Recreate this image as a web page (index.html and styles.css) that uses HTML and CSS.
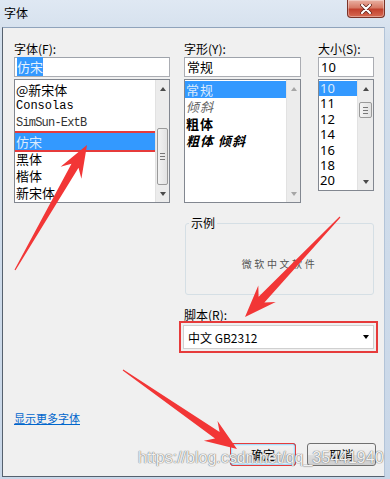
FILE: index.html
```html
<!DOCTYPE html>
<html lang="zh-CN">
<head>
<meta charset="UTF-8">
<meta name="viewport" content="width=device-width, initial-scale=1.0">
<title>字体</title>
<link rel="stylesheet" href="styles.css">
</head>
<body>

<div class="window">

<div class="titlebar">
<span class="title">字体</span>
<button class="close">
<svg width="12" height="10" viewBox="0 0 12 10">
<path d="M2 1 L10 9 M10 1 L2 9" stroke="#5b1d15" stroke-width="3.6" stroke-linecap="round"/>
<path d="M2 1 L10 9 M10 1 L2 9" stroke="#fff" stroke-width="2.2" stroke-linecap="round"/>
</svg>
</button>
</div>

<div class="client">

<div class="main">

<div class="col col-font">
<label>字体(F):</label>
<div class="field"><span class="hilite">仿宋</span></div>
<div class="listbox font-list">
<ul class="items">
<li>@新宋体</li>
<li class="mono">Consolas</li>
<li class="simsun">SimSun-ExtB</li>
<li class="selected marked">仿宋</li>
<li>黑体</li>
<li>楷体</li>
<li>新宋体</li>
</ul>
<div class="scrollbar">
<span class="arrow up"></span>
<div class="track"><span class="thumb"></span></div>
<span class="arrow down"></span>
</div>
</div>
</div>

<div class="col col-right">
<div class="row">

<div class="col col-style">
<label>字形(Y):</label>
<div class="field">常规</div>
<div class="listbox style-list">
<ul class="items">
<li class="selected">常规</li>
<li class="italic">倾斜</li>
<li class="bold">粗体</li>
<li class="bold italic">粗体 倾斜</li>
</ul>
<div class="scrollbar off">
<span class="arrow up"></span>
<div class="track"></div>
<span class="arrow down"></span>
</div>
</div>
</div>

<div class="col col-size">
<label>大小(S):</label>
<div class="field num">10</div>
<div class="listbox size-list">
<ul class="items">
<li class="selected">10</li>
<li>11</li>
<li>12</li>
<li>14</li>
<li>16</li>
<li>18</li>
<li>20</li>
</ul>
<div class="scrollbar">
<span class="arrow up"></span>
<div class="track"><span class="thumb"></span></div>
<span class="arrow down"></span>
</div>
</div>
</div>

</div>

<fieldset class="sample">
<legend>示例</legend>
<span class="sample-text">微软中文软件</span>
</fieldset>

<label class="script-label">脚本(R):</label>
<div class="select">
<span>中文 GB2312</span>
<span class="caret"></span>
</div>
</div>

</div>

<a class="more" href="#">显示更多字体</a>

<div class="buttons">
<button class="btn btn-ok">确定</button>
<button class="btn btn-cancel">取消</button>
</div>

</div>

<div class="watermark">https://blog.csdn.net/qq_35441940</div>

<!-- annotation arrows drawn over the dialog -->
<svg class="arrows" width="390" height="479" viewBox="0 0 390 479">
<polygon points="14.5,269.7 71.5,163.8 60.6,166.7 87,145 81.4,178.7 78.5,167.8 15.5,270.3"/>
<polygon points="339.6,216.6 258.6,296.8 258.3,285.5 245,317 275.7,302.1 264.4,302.4 340.4,217.4"/>
<polygon points="123.3,369.5 219.6,432 217.5,420.9 237,449 203.9,440.7 215,438.6 122.7,370.5"/>
</svg>

</div>

</body>
</html>
```

FILE: styles.css
```css
* {
    box-sizing: border-box;
}

body {
    margin: 0;
    width: 390px;
    height: 479px;
    overflow: hidden;
    font-family: "Noto Sans CJK SC", "Noto Sans", sans-serif;
    font-size: 12px;
    color: #000;
}

.window {
    position: relative;
    display: flex;
    flex-direction: column;
    height: 479px;
    padding: 0 5px 2px 2px;
    background: linear-gradient(180deg, #dfe8f3 0, #d3dfec 40px, #c9d7e8 100%);
}

.titlebar {
    height: 27px;
    display: flex;
    justify-content: space-between;
    align-items: flex-start;
}

.title {
    padding: 6px 0 0 2px;
    line-height: 14px;
    font-size: 12px;
}

.close {
    width: 38px;
    height: 18px;
    padding: 0;
    display: flex;
    align-items: center;
    justify-content: center;
    border: 1px solid #7a3328;
    border-top: none;
    border-radius: 0 0 4px 4px;
    background: linear-gradient(180deg, #eab1a3 0, #d77a66 45%, #c2412e 55%, #d66a52 100%);
    box-shadow: inset 0 0 0 1px rgba(255, 255, 255, .35);
}

.client {
    flex: 1;
    display: flex;
    flex-direction: column;
    background: #f0f0f0;
    border: 1px solid;
    border-color: #8fa3bb #b3c4d8 #56616e #56616e;
    padding: 14px 8px 10px 11px;
}

.main {
    display: flex;
    gap: 14px;
}

.col-font {
    width: 156px;
}

.col-right {
    width: 190px;
    display: flex;
    flex-direction: column;
}

.row {
    display: flex;
    gap: 17px;
    align-items: flex-start;
}

.col-style {
    width: 117px;
}

.col-size {
    width: 56px;
}

label {
    display: block;
    line-height: 14px;
    font-size: 12px;
}

.field {
    margin-top: 1px;
    height: 20px;
    padding: 0 2px;
    border: 1px solid #abadb3;
    border-top-color: #9ea3ab;
    background: #fff;
    font-size: 13px;
    line-height: 18px;
    white-space: nowrap;
}

.field.num {
    font-family: "Noto Sans", sans-serif;
}

.hilite {
    background: #3399ff;
    color: #e6f1fd;
}

.listbox {
    margin-top: 2px;
    display: flex;
    border: 1px solid #828790;
    background: #fff;
}

.font-list {
    height: 124px;
}

.style-list {
    height: 124px;
}

.size-list {
    height: 112px;
}

.items {
    flex: 1;
    list-style: none;
    margin: 0;
    padding: 1px 0 0 0;
    font-size: 13px;
    white-space: nowrap;
    overflow: hidden;
}

.font-list li {
    height: 17.2px;
    line-height: 17.2px;
    padding-left: 1px;
}

.style-list li {
    height: 17px;
    line-height: 17px;
    padding-left: 1px;
    letter-spacing: 1px;
}

.size-list li {
    height: 15.4px;
    line-height: 15px;
    padding-left: 1px;
    font-family: "Noto Sans", sans-serif;
}

.mono {
    font-family: "Liberation Mono", monospace;
    font-size: 12px;
}

.simsun {
    font-family: "Liberation Mono", monospace;
    font-size: 12px;
    letter-spacing: -0.8px;
    color: #333;
}

.selected {
    background: #3399ff;
    color: #dcebfc;
}

.marked {
    outline: 2px solid #e63b3b;
}

.italic {
    font-style: italic;
    color: #666;
}

.bold {
    font-weight: bold;
}

.bold.italic {
    color: #000;
}

.scrollbar {
    width: 14px;
    display: flex;
    flex-direction: column;
    background: #ececec;
    border-left: 1px solid #e2e2e2;
}

.size-list .scrollbar {
    width: 16px;
}

.arrow {
    height: 17px;
    display: flex;
    align-items: center;
    justify-content: center;
}

.arrow::after {
    content: "";
    border-left: 3.5px solid transparent;
    border-right: 3.5px solid transparent;
}

.arrow.up::after {
    border-bottom: 4px solid #4a4a4a;
}

.arrow.down::after {
    border-top: 4px solid #4a4a4a;
}

.off .arrow.up::after {
    border-bottom-color: #a6a6a6;
}

.off .arrow.down::after {
    border-top-color: #a6a6a6;
}

.track {
    flex: 1;
    padding: 0 1px;
}

.thumb {
    display: block;
    height: 57px;
    margin-top: 31px;
    border: 1px solid #9a9a9a;
    border-radius: 2px;
    background:
        linear-gradient(#777, #777) center calc(50% - 3px) / 5px 1px no-repeat,
        linear-gradient(#777, #777) center 50% / 5px 1px no-repeat,
        linear-gradient(#777, #777) center calc(50% + 3px) / 5px 1px no-repeat,
        linear-gradient(90deg, #f3f3f3, #e2e2e2);
}

.size-list .thumb {
    height: 16px;
    margin-top: 5px;
}

.sample {
    margin: 13px 0 0 1px;
    padding: 0;
    min-width: 0;
    border: 1px solid #d5dfe5;
    border-radius: 3px;
}

.sample legend {
    margin-left: 3px;
    padding: 0 2px;
    line-height: 14px;
    font-size: 12px;
}

.sample-text {
    display: block;
    padding: 28px 0 24px;
    text-align: center;
    line-height: 12px;
    font-size: 10px;
    letter-spacing: 2.6px;
    color: #555;
}

.script-label {
    margin-top: 13px;
}

.select {
    margin: 3px 0 0 -1px;
    height: 24px;
    display: flex;
    align-items: center;
    justify-content: space-between;
    padding: 0 4px 0 4px;
    border: 1px solid #d0d0d0;
    background: #fff;
    font-size: 12px;
    outline: 2px solid #e63b3b;
    outline-offset: 2px;
}

.caret {
    border-left: 3.5px solid transparent;
    border-right: 3.5px solid transparent;
    border-top: 4px solid #000;
}

.more {
    margin-top: auto;
    align-self: flex-start;
    line-height: 14px;
    font-size: 11px;
    color: #0066cc;
}

.buttons {
    margin-top: 18px;
    display: flex;
    justify-content: flex-end;
    gap: 11px;
}

.btn {
    height: 23px;
    padding: 0;
    font-family: "Noto Sans CJK SC", sans-serif;
    font-size: 12px;
    color: #000;
    border: 1px solid #707070;
    border-radius: 3px;
    background: linear-gradient(180deg, #f2f2f2 0, #ebebeb 50%, #dddddd 51%, #cfcfcf 100%);
}

.btn-ok {
    width: 66px;
    border-color: #3c7fb1;
    box-shadow: inset 0 0 0 1px #a9dcf5, inset 0 0 0 2px #d6eefb;
    outline: 1.5px solid #e63b3b;
    outline-offset: -1px;
}

.btn-cancel {
    width: 69px;
}

.watermark {
    position: absolute;
    left: 138px;
    top: 449px;
    font-family: "Liberation Sans", Arial, sans-serif;
    font-size: 16px;
    line-height: 18px;
    color: rgba(255, 255, 255, .92);
    text-shadow: 0 0 1px #6d6d6d, 0 0 1px #6d6d6d;
    white-space: nowrap;
}

.arrows {
    position: absolute;
    left: 0;
    top: 0;
    pointer-events: none;
}

.arrows polygon {
    fill: #f23636;
}
```
